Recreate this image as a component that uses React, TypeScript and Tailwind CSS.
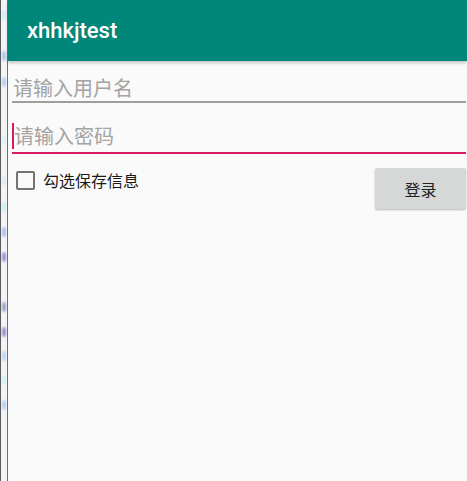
import React from 'react'

const cjk = "font-['Noto_Sans_CJK_SC','Noto_Sans',sans-serif]"

// blurred bits of the window behind, seen through the thin left edge
const spots = [
    { y: 15, c: '#cfeefa' },
    { y: 56, c: '#a9c4ee' },
    { y: 82, c: '#b5cdf2' },
    { y: 140, c: '#d9f2f8' },
    { y: 181, c: '#d7eefa' },
    { y: 207, c: '#c9eef6' },
    { y: 232, c: '#a6bde8' },
    { y: 257, c: '#9f88d8' },
    { y: 307, c: '#8fa3c4' },
    { y: 332, c: '#9c86d6' },
    { y: 356, c: '#b9d2f4' },
    { y: 380, c: '#d2f1f6' },
    { y: 405, c: '#b4ccf3' },
]

function EdgeStrip(): React.JSX.Element {
    return (
        <div className="h-full w-[8px] shrink-0 border-l border-r border-l-[#5c5c5c] border-r-[#6e6e6e] bg-[#f3f4f6]">
            <svg width="6" height="481" viewBox="0 0 6 481" className="block">
                <defs>
                    <filter id="soft" x="-1" y="-1" width="3" height="3">
                        <feGaussianBlur stdDeviation="1.2" />
                    </filter>
                </defs>
                {spots.map((s) => (
                    <ellipse key={s.y} cx="3" cy={s.y} rx="2" ry="5" fill={s.c} filter="url(#soft)" />
                ))}
            </svg>
        </div>
    )
}

function App(): React.JSX.Element {

    return (
        <div className="flex h-[481px] w-[467px] overflow-hidden bg-[#fafafa]">
            <EdgeStrip />

            <div className="flex min-w-0 flex-1 flex-col">
                <header className="relative z-10 flex h-[61px] items-center bg-[#01877a] pl-[19px] pt-[1px] shadow-[0_2px_3px_rgba(0,0,0,0.22)]">
                    <h1 className="font-['Roboto',sans-serif] text-[22px] font-medium leading-none text-white">xhhkjtest</h1>
                </header>

                <div className={`ml-[4px] mr-[1px] mt-[17px] border-b-2 border-[#9e9e9e] pb-[3px] pl-[1px] ${cjk}`}>
                    <div className="h-[20px] text-[20px] leading-[20px] text-[#a3a3a3]">请输入用户名</div>
                </div>

                <div className={`ml-[4px] mr-[1px] mt-[20px] border-b-2 border-[#d81b60] pb-[3px] ${cjk}`}>
                    <div className="flex h-[26px] items-center">
                        <span className="h-[26px] w-[2px] shrink-0 bg-[#d81b60]" />
                        <span className="text-[20px] leading-[20px] text-[#a3a3a3]">请输入密码</span>
                    </div>
                </div>

                <div className={`mr-[1px] mt-[14px] flex items-start justify-between ${cjk}`}>
                    <label className="ml-[8px] mt-[2px] flex items-center gap-[8px]">
                        <span className="h-[19px] w-[19px] rounded-[2px] border-2 border-[#737373]" />
                        <span className="text-[16px] leading-[20px] text-[#1a1a1a]">勾选保存信息</span>
                    </label>

                    <button className="h-[41px] w-[91px] rounded-[2px] bg-[#d6d7d7] text-[16px] text-[#222] shadow-[0_1px_2px_rgba(0,0,0,0.25)]">
                        登录
                    </button>
                </div>
            </div>
        </div>
    )

}

export default App
